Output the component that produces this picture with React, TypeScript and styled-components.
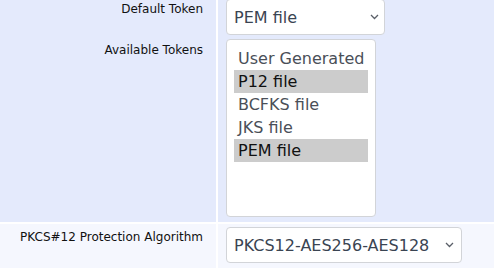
import React from "react";
import styled, { createGlobalStyle } from "styled-components";

const Global = createGlobalStyle`
  html, body { margin: 0; padding: 0; background: #ffffff; }
  body { font-family: "DejaVu Sans", Verdana, sans-serif; }
`;

const Table = styled.div`
  margin-top: -4px;
  display: flex;
  flex-direction: column;
  gap: 2px;
`;

const Section = styled.div`
  display: flex;
  flex-direction: column;
`;

const Row = styled.div<{ $pt: number; $pb: number; $bg: string }>`
  display: grid;
  grid-template-columns: 216px 1fr;
  column-gap: 2px;
  & > * {
    background: ${(p) => p.$bg};
    padding-top: ${(p) => p.$pt}px;
    padding-bottom: ${(p) => p.$pb}px;
  }
`;

const Label = styled.div<{ $lt: number }>`
  font-size: 12px;
  color: #111;
  text-align: right;
  padding-right: 13px;
  && { padding-top: ${(p) => p.$lt}px; }
`;

const Field = styled.div`
  padding-left: 8px;
  display: flex;
  align-items: flex-start;
`;

const SelectBox = styled.div<{ $w: number; $caret: number }>`
  box-sizing: border-box;
  width: ${(p) => p.$w}px;
  height: 36px;
  border: 1px solid #d2d4d8;
  border-radius: 4px;
  background: #fff;
  display: flex;
  align-items: center;
  justify-content: space-between;
  padding-left: 7px;
  padding-right: ${(p) => p.$caret}px;
  font-size: 16px;
  color: #3a4452;
`;

const ListBox = styled.div`
  box-sizing: border-box;
  width: 150px;
  height: 178px;
  border: 1px solid #d2d4d8;
  border-radius: 4px;
  background: #fff;
  padding: 7px 7px;
  display: flex;
  flex-direction: column;
`;

const Option = styled.div<{ $selected?: boolean }>`
  height: 23px;
  line-height: 23px;
  padding-left: 4px;
  font-size: 16px;
  white-space: nowrap;
  color: ${(p) => (p.$selected ? "#111" : "#4a4f58")};
  background: ${(p) => (p.$selected ? "#cccccc" : "transparent")};
`;

const Chevron = () => (
  <svg width="9" height="6" viewBox="0 0 9 6">
    <path d="M1 1 L4.5 4.5 L8 1" fill="none" stroke="#5a5f68" strokeWidth="1.3" />
  </svg>
);

const BLUE = "#e4eafc";
const LIGHT = "#f5f7fe";

export default function App() {
  const tokens = [
    { name: "User Generated", selected: false },
    { name: "P12 file", selected: true },
    { name: "BCFKS file", selected: false },
    { name: "JKS file", selected: false },
    { name: "PEM file", selected: true },
  ];
  return (
    <>
      <Global />
      <Table>
        <Section>
          <Row $pt={3} $pb={1} $bg={BLUE}>
            <Label $lt={6}>Default Token</Label>
            <Field>
              <SelectBox $w={159} $caret={5}>
                <span>PEM file</span>
                <Chevron />
              </SelectBox>
            </Field>
          </Row>
          <Row $pt={3} $pb={5} $bg={BLUE}>
            <Label $lt={7}>Available Tokens</Label>
            <Field>
              <ListBox>
                {tokens.map((t) => (
                  <Option key={t.name} $selected={t.selected}>
                    {t.name}
                  </Option>
                ))}
              </ListBox>
            </Field>
          </Row>
        </Section>
        <Row $pt={3} $pb={5} $bg={LIGHT}>
          <Label $lt={6}>PKCS#12 Protection Algorithm</Label>
          <Field>
            <SelectBox $w={236} $caret={7}>
              <span>PKCS12-AES256-AES128</span>
              <Chevron />
            </SelectBox>
          </Field>
        </Row>
      </Table>
    </>
  );
}
